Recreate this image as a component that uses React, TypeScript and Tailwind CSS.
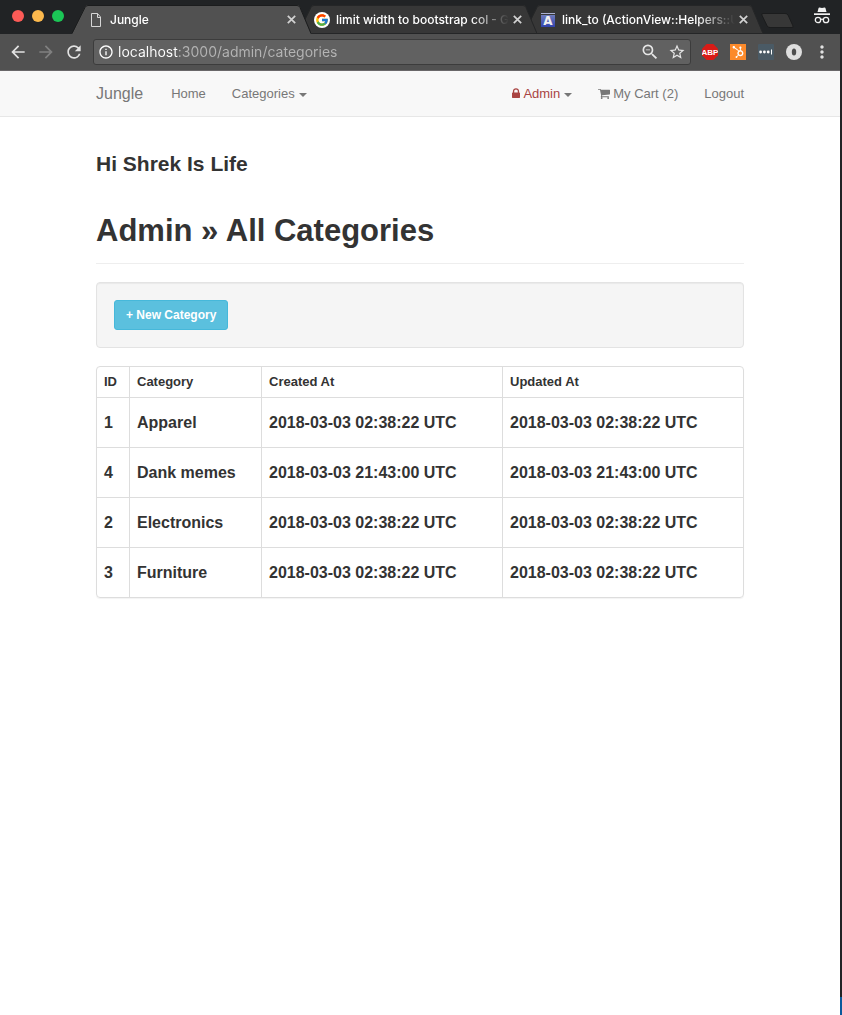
import React from "react";
import { FaHubspot } from "react-icons/fa";
import { FcGoogle } from "react-icons/fc";
import { MdArrowBack, MdArrowForward, MdInfoOutline, MdMoreVert, MdRefresh, MdStarBorder, MdZoomOut } from "react-icons/md";

type Category = { id: number; name: string; createdAt: string; updatedAt: string };

const categories: Category[] = [
  { id: 1, name: "Apparel", createdAt: "2018-03-03 02:38:22 UTC", updatedAt: "2018-03-03 02:38:22 UTC" },
  { id: 4, name: "Dank memes", createdAt: "2018-03-03 21:43:00 UTC", updatedAt: "2018-03-03 21:43:00 UTC" },
  { id: 2, name: "Electronics", createdAt: "2018-03-03 02:38:22 UTC", updatedAt: "2018-03-03 02:38:22 UTC" },
  { id: 3, name: "Furniture", createdAt: "2018-03-03 02:38:22 UTC", updatedAt: "2018-03-03 02:38:22 UTC" },
];

function PageIcon() {
  return (
    <svg width="16" height="16" viewBox="0 0 16 16" fill="none" stroke="#d6d6d6">
      <path d="M3.5 1.5h6l3 3.500v9.500h-9z" />
      <path d="M9.500 1.500v4h3" />
    </svg>
  );
}

function GoogleIcon() {
  return (
    <span className="flex size-4 items-center justify-center rounded-full bg-white">
      <FcGoogle className="size-3.5" />
    </span>
  );
}

function DocsIcon() {
  return (
    <svg width="16" height="16" viewBox="0 0 16 16">
      <defs>
        <linearGradient id="docs-fill" x1="0" y1="0" x2="0" y2="1">
          <stop offset="0" stopColor="#6f7cbc" />
          <stop offset="1" stopColor="#3143ac" />
        </linearGradient>
      </defs>
      <rect x="1" y="1" width="14" height="1" fill="#a9b0d2" />
      <rect x="1" y="3" width="14" height="12" fill="url(#docs-fill)" />
      <text x="8" y="13" textAnchor="middle" fontFamily="DejaVu Sans, sans-serif" fontSize="12" fontWeight="700" fill="#f0f0f0">A</text>
    </svg>
  );
}

function Tab({ title, icon, active = false, order }: { title: string; icon: React.ReactNode; active?: boolean; order: string }) {
  return (
    <div className={`relative flex h-[29px] w-[239px] shrink-0 items-center pl-4 pr-3.5 ${order}`}>
      <svg className="absolute inset-0 h-full w-full" viewBox="0 0 239 29" preserveAspectRatio="none">
        <path d="M0 29 L13 2 Q14 0 16 0 H225 Q227 0 228 2 L239 29 Z" fill={active ? "#515151" : "#373737"} />
        <path
          d={active ? "M0 28.5 L13 2.5 Q14 .5 16 .5 H225 Q227 .5 228 2.5 L239 28.5" : "M0 28.5 L13 2.5 Q14 .5 16 .5 H225 Q227 .5 228 2.5 L239 28.5 H0"}
          fill="none"
          stroke={active ? "#1b1c1d" : "#252627"}
        />
      </svg>
      <span className="relative flex size-4 shrink-0 items-center justify-center">{icon}</span>
      <span className="relative ml-1.5 w-[173px] overflow-hidden whitespace-nowrap text-xs font-medium text-white mask-[linear-gradient(to_right,#000_135px,transparent)]">
        {title}
      </span>
      <button type="button" aria-label={`Close ${title}`} className="relative ml-0.5 flex size-3 shrink-0 items-center justify-center">
        <svg width="9" height="9" viewBox="0 0 9 9" stroke="#d2d2d2" strokeWidth="1.7">
          <path d="M.8 .8l7.4 7.4M8.2 .8L.8 8.2" />
        </svg>
      </button>
    </div>
  );
}

function IncognitoIcon() {
  return (
    <svg width="18" height="18" viewBox="0 0 18 18" fill="none">
      <path d="M5.5 1.200Q5.700 .5 6.500 .6L9 1 11.500 .6Q12.300 .5 12.500 1.200L13.500 5H4.500Z" fill="#f1f1f1" />
      <path d="M1 6.300H17V8H1Z" fill="#f1f1f1" />
      <g stroke="#f1f1f1" strokeWidth="1.300">
        <circle cx="5" cy="13" r="2.700" />
        <circle cx="13" cy="13" r="2.700" />
        <path d="M7.700 12.500Q9 11.600 10.300 12.500" />
      </g>
    </svg>
  );
}

function TabStrip() {
  return (
    <div className="flex h-[34px] items-end bg-[#212325]">
      <div className="flex w-[72px] shrink-0 gap-2 self-start pl-3 pt-2.5">
        <button type="button" aria-label="Close window" className="size-3 rounded-full bg-[#fc5b57]" />
        <button type="button" aria-label="Minimize window" className="size-3 rounded-full bg-[#fdb94d]" />
        <button type="button" aria-label="Zoom window" className="size-3 rounded-full bg-[#1bc656]" />
      </div>
      <div className="flex shrink-0 -space-x-[13px]">
        <Tab title="Jungle" icon={<PageIcon />} active order="z-30" />
        <Tab title="limit width to bootstrap col - G" icon={<GoogleIcon />} order="z-20" />
        <Tab title="link_to (ActionView::Helpers::U" icon={<DocsIcon />} order="z-10" />
      </div>
      <button type="button" aria-label="New tab" className="mb-1.5 -ml-0.5 shrink-0">
        <svg width="33" height="15" viewBox="0 0 33 15">
          <path d="M2 .5H24Q26 .5 27 2L32 13Q32.500 14.500 31 14.500H9Q7 14.500 6.200 13L.8 2Q.3 .5 2 .5Z" fill="#373737" stroke="#1b1c1d" />
        </svg>
      </button>
      <div className="ml-auto mr-[9px] self-start pt-[7px]">
        <IncognitoIcon />
      </div>
    </div>
  );
}

function Toolbar() {
  return (
    <div className="flex h-[37px] items-center border-b border-[#696769] bg-[#515151] pr-2.5">
      <div className="flex w-[93px] shrink-0 gap-2 pl-2">
        <button type="button" aria-label="Back" className="text-[#e2e2e2]"><MdArrowBack className="size-5" /></button>
        <button type="button" aria-label="Forward" className="text-[#808080]"><MdArrowForward className="size-5" /></button>
        <button type="button" aria-label="Reload" className="text-[#e2e2e2]"><MdRefresh className="size-5" /></button>
      </div>
      <div className="flex h-[26px] min-w-0 flex-1 items-center rounded-[3px] border border-[#3c3c3c] bg-[#616161] px-1">
        <MdInfoOutline className="size-4 shrink-0 text-white" />
        <input
          type="text"
          aria-label="Address"
          defaultValue="localhost:3000/admin/categories"
          className="ml-1 min-w-0 flex-1 bg-[linear-gradient(to_right,#ffffff_60px,#b4b4b4_60px)] bg-clip-text text-sm text-transparent outline-none"
        />
        <button type="button" aria-label="Zoom out" className="text-[#e6e6e6]"><MdZoomOut className="size-5" /></button>
        <button type="button" aria-label="Bookmark" className="ml-2 text-[#e6e6e6]"><MdStarBorder className="size-[18px]" /></button>
      </div>
      <div className="ml-[11px] flex shrink-0 items-center gap-3">
        <button type="button" aria-label="Adblock Plus" className="size-4">
          <svg width="16" height="16" viewBox="0 0 16 16">
            <path d="M4.700 0H11.300L16 4.700V11.300L11.300 16H4.700L0 11.300V4.700Z" fill="#d91b16" />
            <text x="8" y="11" textAnchor="middle" fontFamily="Liberation Sans Narrow, Liberation Sans, sans-serif" fontSize="8" fontWeight="700" fill="#ffffff">ABP</text>
          </svg>
        </button>
        <button type="button" aria-label="HubSpot" className="flex size-4 items-center justify-center bg-[#fc8a2b] text-white">
          <FaHubspot className="size-3" />
        </button>
        <button type="button" aria-label="Password manager" className="size-4">
          <svg width="16" height="16" viewBox="0 0 16 16">
            <rect width="16" height="16" rx="1" fill="#4a5a65" />
            <g fill="#ffffff">
              <circle cx="2.600" cy="8" r="1.400" />
              <circle cx="6.400" cy="8" r="1.400" />
              <circle cx="10.200" cy="8" r="1.400" />
              <rect x="13" y="5.500" width="1" height="5" />
            </g>
          </svg>
        </button>
        <button type="button" aria-label="Extension" className="size-4">
          <svg width="16" height="16" viewBox="0 0 16 16">
            <circle cx="8" cy="8" r="8" fill="#dedede" />
            <ellipse cx="8" cy="8" rx="2.200" ry="3.500" fill="#4d4d4d" />
          </svg>
        </button>
        <button type="button" aria-label="Menu" className="flex size-4 items-center justify-center text-[#e2e2e2]">
          <MdMoreVert className="size-5 shrink-0" />
        </button>
      </div>
    </div>
  );
}

function LockIcon() {
  return (
    <svg className="mr-[3px] h-[13px] w-2" viewBox="0 0 1152 1792" fill="#a94442">
      <path d="M320 768h512v-192q0-106-75-181t-181-75-181 75-75 181v192zm832 96v576q0 40-28 68t-68 28h-960q-40 0-68-28t-28-68v-576q0-40 28-68t68-28h32v-192q0-184 132-316t316-132 316 132 132 316v192h32q40 0 68 28t28 68z" />
    </svg>
  );
}

function CartIcon() {
  return (
    <svg className="mr-[3px] h-[13px] w-3" viewBox="0 0 1664 1792" fill="currentColor">
      <path d="M640 1536q0 52-38 90t-90 38-90-38-38-90 38-90 90-38 90 38 38 90zm896 0q0 52-38 90t-90 38-90-38-38-90 38-90 90-38 90 38 38 90zm128-1088v512q0 24-16.500 42.500t-40.500 21.500l-1044 122q13 60 13 70 0 16-24 64h920q26 0 45 19t19 45-19 45-45 19h-1024q-26 0-45-19t-19-45q0-11 8-31.500t16-36 21.500-40 15.500-29.500l-177-823h-204q-26 0-45-19t-19-45 19-45 45-19h256q16 0 28.500 6.500t19.500 15.500 13 24.500 8 26 5.500 29.500 4.500 26h1201q26 0 45 19t19 45z" />
    </svg>
  );
}

function Caret() {
  return <span className="ml-1 mt-0.5 inline-block border-x-4 border-t-4 border-x-transparent border-t-[#777777]" />;
}

function Navbar() {
  return (
    <nav className="border-b border-[#e7e7e7] bg-[#f8f8f8]">
      <div className="mx-auto flex h-[45px] max-w-[648px] items-center text-[13px] text-[#777777]">
        <a href="#jungle" className="text-base">Jungle</a>
        <a href="#home" className="ml-7">Home</a>
        <a href="#categories" className="ml-[26px] flex items-center">Categories<Caret /></a>
        <div className="ml-auto flex items-center gap-[26px]">
          <a href="#admin" className="flex items-center">
            <LockIcon />
            <span className="text-[#a94442]">Admin</span>
            <Caret />
          </a>
          <a href="#cart" className="flex items-center">
            <CartIcon />
            My Cart (2)
          </a>
          <a href="#logout">Logout</a>
        </div>
      </div>
    </nav>
  );
}

function CategoryTable() {
  const divider = "border-r border-[#dddddd] last:border-r-0";
  return (
    <div className="mt-[18px] overflow-hidden rounded border border-[#dddddd] shadow-[0_1px_1px_rgba(0,0,0,0.05)]">
      <table className="w-full table-fixed border-separate border-spacing-0 text-left font-bold">
        <colgroup>
          <col className="w-[33px]" />
          <col className="w-[132px]" />
          <col className="w-[241px]" />
          <col />
        </colgroup>
        <thead className="text-[13px]">
          <tr className="h-[31px]">
            {["ID", "Category", "Created At", "Updated At"].map((label) => (
              <th key={label} scope="col" className={`border-b px-[7px] py-0 ${divider}`}>{label}</th>
            ))}
          </tr>
        </thead>
        <tbody className="text-base">
          {categories.map((category) => (
            <tr key={category.id} className="group h-[50px] last:h-[49px]">
              {[category.id, category.name, category.createdAt, category.updatedAt].map((value, column) => (
                <td key={column} className={`border-b px-[7px] py-0 group-last:border-b-0 ${divider}`}>{value}</td>
              ))}
            </tr>
          ))}
        </tbody>
      </table>
    </div>
  );
}

export default function App() {
  return (
    <div className="flex min-h-screen bg-white">
      <div className="min-w-0 flex-1">
        <header className="overflow-hidden font-['Inter',sans-serif]">
          <TabStrip />
          <Toolbar />
        </header>
        <div className="font-['Liberation_Sans',Arial,sans-serif] text-[#333333]">
          <Navbar />
          <main className="mx-auto max-w-[648px] pt-[33px]">
            <h4 className="text-[21px] font-bold leading-7">Hi Shrek Is Life</h4>
            <h1 className="mt-[33px] border-b border-[#eeeeee] pb-3 text-[31px] font-bold leading-10">Admin » All Categories</h1>
            <div className="mt-[18px] flex rounded border border-[#e3e3e3] bg-[#f5f5f5] p-[17px] shadow-[inset_0_1px_1px_rgba(0,0,0,0.05)]">
              <a href="#new" className="flex h-[30px] items-center rounded-[3px] border border-[#46b8da] bg-[#5bc0de] px-[11px] text-xs font-bold text-white">
                + New Category
              </a>
            </div>
            <CategoryTable />
          </main>
        </div>
      </div>
      <div className="flex w-0.5 shrink-0 flex-col bg-[#212325]">
        <div className="mt-auto h-[18px] bg-[#0a5a9c]" />
      </div>
    </div>
  );
}
